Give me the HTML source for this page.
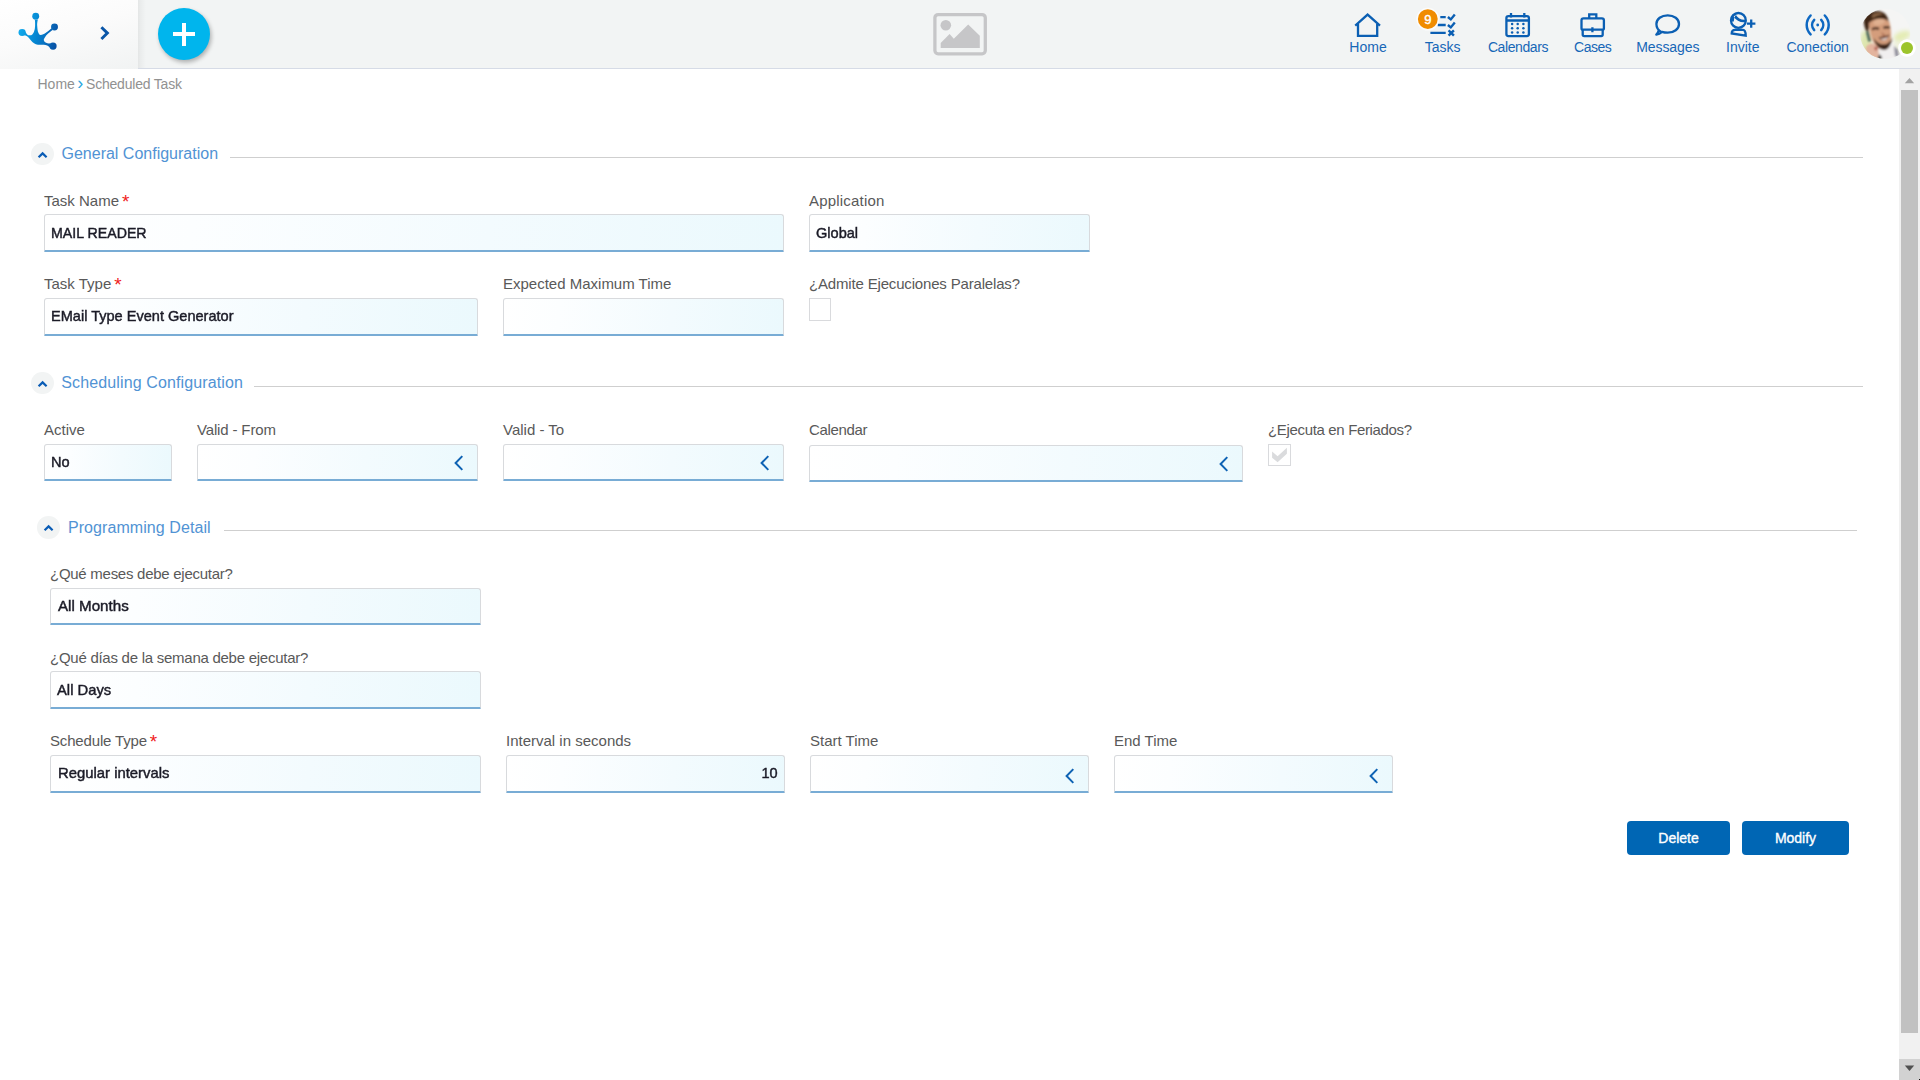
<!DOCTYPE html>
<html lang="en">
<head>
<meta charset="utf-8">
<title>Scheduled Task</title>
<style>
*{box-sizing:border-box;margin:0;padding:0}
html,body{width:1920px;height:1080px;overflow:hidden;background:#fff}
body{font-family:"Liberation Sans",sans-serif;color:#555;position:relative}
.abs{position:absolute}
#hdr{position:absolute;left:0;top:0;width:1920px;height:69px;background:#f2f4f4;border-bottom:1px solid #d6dbe6}
#hdrL{position:absolute;left:0;top:0;width:138px;height:69px;background:linear-gradient(165deg,#ffffff 0%,#fbfbfb 45%,#f1f3f3 100%)}
#hdrR{position:absolute;left:138px;top:0;width:8px;height:68px;background:linear-gradient(90deg,rgba(0,0,0,.058),rgba(0,0,0,.03) 35%,rgba(0,0,0,0))}
#plus{position:absolute;left:158px;top:8px;width:52px;height:52px;border-radius:50%;background:#00b5ed;box-shadow:1.5px 2.5px 4px rgba(0,0,0,.28)}
#plus:before{content:"";position:absolute;left:15px;top:24px;width:22px;height:4px;background:#fff}
#plus:after{content:"";position:absolute;left:24px;top:14.7px;width:4px;height:23.3px;background:#fff}
.nav{position:absolute;top:39px;font-size:14px;line-height:16px;color:#1767b7;white-space:nowrap;text-align:center;transform:translateX(-50%)}
.ico{position:absolute;top:0;left:0}
.bc{position:absolute;top:76px;font-size:14px;line-height:16px;color:#919191;white-space:nowrap}
.circ{position:absolute;width:23px;height:22.6px;border-radius:50%;background:#f2f4f4}
.stitle{position:absolute;font-size:16px;line-height:20px;color:#5193d4;white-space:nowrap}
.sline{position:absolute;height:1px;background:#cfcfcf}
.lbl{position:absolute;font-size:15px;line-height:18px;color:#595959;white-space:nowrap}
.lbl b{font-weight:normal;color:#f02020;font-size:19px;line-height:0;position:relative;top:2px;margin-left:-1.2px;letter-spacing:0}
.inp{position:absolute;border:1px solid #d8dadd;border-bottom:2px solid #78acd5;border-radius:3px 3px 1px 1px;background:linear-gradient(95deg,#ffffff 0%,#fcfeff 20%,#f3fbfe 60%,#ebf9fd 100%)}
.v{position:absolute;left:5.6px;font-size:15px;line-height:18px;color:#1b1b27;white-space:nowrap;-webkit-text-stroke:0.45px #1b1b27;transform-origin:0 50%;display:block}
.v.r{left:auto;right:6px;transform-origin:100% 50%}
.chk{position:absolute;border:1px solid #d9dadd;background:#fff}
.btn{position:absolute;top:821px;height:34px;border-radius:4px;background:#0066b4}
.btn span{position:absolute;left:0;right:0;top:8px;text-align:center;color:#fff;font-size:14px;line-height:18px;-webkit-text-stroke:0.35px #fff;display:block}
#sb{position:absolute;left:1899px;top:69px;width:21px;height:1011px;background:#f1f1f1}
#sbthumb{position:absolute;left:2px;top:21px;width:17px;height:943px;background:#c1c1c1}
#sbdn{position:absolute;left:0;top:990px;width:21px;height:21px;background:#d2d2d2}
</style>
</head>
<body>
<div id="hdr">
<div id="hdrL"></div><div id="hdrR"></div>
<div id="plus"></div>
<svg class="ico" width="1920" height="69" viewBox="0 0 1920 69">
<defs>
<linearGradient id="lg" x1="19" y1="30" x2="57" y2="38" gradientUnits="userSpaceOnUse"><stop offset="0" stop-color="#12aaec"/><stop offset=".45" stop-color="#0587d2"/><stop offset=".7" stop-color="#0872c2"/><stop offset="1" stop-color="#0853a6"/></linearGradient>
<clipPath id="avc"><circle cx="1885.2" cy="33.9" r="25.1"/></clipPath>
<radialGradient id="avbg" cx="1905" cy="30" r="40" gradientUnits="userSpaceOnUse"><stop offset="0" stop-color="#f6f6f4"/><stop offset=".5" stop-color="#f1f1ec"/><stop offset="1" stop-color="#e4e8c8"/></radialGradient>
<filter id="bl1" x="-10%" y="-10%" width="120%" height="120%"><feGaussianBlur stdDeviation="0.85"/></filter><filter id="bl2" x="-30%" y="-30%" width="160%" height="160%"><feGaussianBlur stdDeviation="2.2"/></filter>
</defs>
<!-- logo -->
<g fill="url(#lg)">
<path d="M37.85 19.5 C37.3 22 37 24 37.2 26 C37.4 29 37.6 31 38.4 32.8 C39 34.2 39.6 35 40.6 35 C42.5 35 44 34.2 45.5 33.1 C47.5 31.6 49 30.2 51.5 28.2 L52.6 30 C50.5 31.4 49.3 32.5 48.1 33.6 C46.6 35 45.5 36.4 44.7 37.8 C44 38.8 43.6 39.6 43.9 40.4 C44.2 41.4 44.8 42.1 45.6 42.6 C46.8 43.3 48 43.6 49 43.6 L50.6 43.3 L50.2 47.6 C49.3 46.8 48.3 46 47.2 45.5 C46 45 45 44.8 43.8 44.8 L37.85 44.8 C36.4 44.7 35.2 44.2 34 43.35 C32.8 42.5 31.8 41.4 31 40.4 C30.2 39.4 29.4 38.3 28.5 37.4 C27.6 36.5 26.6 35.9 25.5 35.5 L23.8 35.3 L25 31.6 C25.8 32.6 26.4 33.6 27.2 34.4 C28 35.1 28.8 35.4 29.8 35.3 C30.8 35.3 31.6 35 32.3 34.4 C33.2 33.7 33.7 32.8 34 31.85 C34.7 30 35 28 35.1 25.9 C35.2 24 35.1 22 34.9 19.9 Z"/>
<circle cx="35.7" cy="16.3" r="3.45"/><circle cx="54.5" cy="26.95" r="3.45"/><ellipse cx="22.1" cy="32.5" rx="3.6" ry="3.4"/><circle cx="53" cy="46.1" r="3.65"/>
</g>
<path d="M101.4 27.2 L107.4 33.1 L101.4 39" fill="none" stroke="#0a56a8" stroke-width="2.9"/>
<!-- image placeholder -->
<rect x="934.9" y="14.6" width="50.4" height="39.2" rx="3.2" fill="none" stroke="#c6c6c8" stroke-width="3.3"/>
<circle cx="945.8" cy="25.2" r="5.3" fill="#c6c6c8"/>
<path d="M940.7 47.9 V42.9 L949.6 34.1 L953.8 38.7 L968.2 24.5 L979.8 35.8 V47.9 Z" fill="#c6c6c8"/>
<!-- nav icons -->
<g fill="none" stroke="#0b5fb3" stroke-width="2.3">
<!-- home -->
<path d="M1358 24 V35.9 H1377.2 V24"/><path d="M1356.1 24.8 L1367.6 14.6 L1379.1 24.8" stroke-linecap="square"/>
<!-- tasks -->
<path d="M1440.3 17.1 H1445.7 M1437.7 25 H1445.7 M1430.4 32.9 H1445.7"/>
<path d="M1447.9 17 L1450.8 19.4 L1454.8 14.6 M1447.9 25 L1450.8 27.4 L1454.8 22.6 M1448.6 30.3 L1453.9 35.6 M1453.9 30.3 L1448.6 35.6" stroke-width="2.4"/>
<!-- calendar -->
<rect x="1506.4" y="16.1" width="22.5" height="20" rx="2"/>
<path d="M1506.4 20.5 H1528.9 M1511 13 V17.6 M1524.3 13 V17.6"/>
<!-- cases -->
<path d="M1583.5 18.3 H1601.9 Q1603.9 18.3 1603.9 20.3 V28.2 Q1603.9 29.7 1602.4 29.7 H1583 Q1581.5 29.7 1581.5 28.2 V20.3 Q1581.5 18.3 1583.5 18.3 Z"/>
<path d="M1582.7 29.7 V34.6 Q1582.7 36.1 1584.2 36.1 H1601.2 Q1602.7 36.1 1602.7 34.6 V29.7 M1589.2 18 V14.3 H1596.3 V18 M1592.4 27.2 V32.2"/>
<!-- messages -->
<path d="M1661.5 32.2 C1658.3 30.4 1656.4 27.4 1656.4 24 C1656.4 18.9 1661.4 15.3 1667.7 15.3 C1674 15.3 1679 18.9 1679 24 C1679 29.1 1674 32.7 1667.7 32.7 C1665.6 32.7 1663.6 32.4 1662 31.9 C1660.4 33.3 1658.4 34.2 1656.3 34.5 C1657.8 33.2 1658.6 31.5 1658.9 29.8" stroke-linejoin="round"/>
<!-- invite -->
<circle cx="1738.4" cy="20.4" r="7.4"/>
<path d="M1747 23.7 H1755.4 M1751.2 19.6 V27.8"/>
<path d="M1731.7 33.5 C1731.7 30.8 1733.2 29.9 1735.2 29.9 H1743 C1745 29.9 1745.6 31.2 1745.7 35.6 Z" stroke-linejoin="miter"/>
</g>
<path d="M1730.6 21.5 C1730.4 16.5 1733.6 13 1738 12.6 C1735.4 14.6 1734 17.6 1733.8 21.6 Z M1733.6 16.4 C1736.4 21.2 1741.6 23 1746.2 21.9 L1745.8 19.7 C1741.8 20.4 1738 18.6 1735.6 14.4 Z" fill="#0b5fb3"/>
<!-- connection -->
<g fill="none" stroke="#0e68c2" stroke-width="2.5" stroke-linecap="round">
<path d="M1814.2 19.9 C1811.4 23 1811.4 27 1814.2 30.1 M1810.6 15.5 C1805.4 21 1805.4 29 1810.6 34.3 M1821.2 19.9 C1824 23 1824 27 1821.2 30.1 M1824.8 15.5 C1830 21 1830 29 1824.8 34.3"/>
</g>
<circle cx="1817.7" cy="25" r="1.4" fill="#0e68c2"/>
<g fill="#0b5fb3">
<circle cx="1512.1" cy="24.1" r="1.25"/><circle cx="1517.7" cy="24.1" r="1.25"/><circle cx="1523.4" cy="24.1" r="1.25"/>
<circle cx="1512.1" cy="28.3" r="1.25"/><circle cx="1517.7" cy="28.3" r="1.25"/><circle cx="1523.4" cy="28.3" r="1.25"/>
<circle cx="1512.1" cy="32.6" r="1.25"/><circle cx="1517.7" cy="32.6" r="1.25"/><circle cx="1523.4" cy="32.6" r="1.25"/>
</g>
<!-- badge -->
<circle cx="1427.8" cy="19.1" r="11.4" fill="#fbfcfc"/>
<circle cx="1427.8" cy="19.1" r="9.9" fill="#f08c00"/>
<text x="1427.9" y="23.6" font-family="Liberation Sans, sans-serif" font-size="13" fill="#fff" stroke="#fff" stroke-width="0.4" text-anchor="middle">9</text>
<!-- avatar -->
<g clip-path="url(#avc)">
<rect x="1858" y="7" width="55" height="55" fill="#f5f5f4"/>
<g filter="url(#bl2)">
<ellipse cx="1902" cy="36" rx="9" ry="4.5" fill="#e4ecb4" transform="rotate(-22 1902 36)"/>
<ellipse cx="1900" cy="48" rx="9" ry="7" fill="#eef1dc"/>
<ellipse cx="1866" cy="42" rx="6" ry="12" fill="#dde6ae"/>
<ellipse cx="1872" cy="57" rx="8" ry="5" fill="#ecdca8"/>
</g>
<g filter="url(#bl1)">
<path d="M1876 60 L1880 48 L1893 44 L1899 52 L1900 60 Z" fill="#f1efef"/>
<path d="M1894 46 L1898 50 L1899 58 L1895 56 Z" fill="#8d8c9a"/>
<path d="M1877 60 L1879 54 L1882 57 L1881 60 Z" fill="#3a3838"/>
<path d="M1864 24 C1862 15 1870 10.5 1878 11 C1884 11.5 1887.5 15 1889 22 C1884 19 1876 20 1871 24 C1869 27 1868.5 30 1868 33 C1866 31 1864.5 28 1864 24 Z" fill="#412817"/>
<path d="M1872 15.5 C1875 12.6 1880 12.4 1883 14.6 C1879.6 14.6 1875 16 1872.6 18.4 Z" fill="#8c6646"/>
<path d="M1869 23 C1874 18 1884 17 1889.5 22 C1891 28 1891.5 36 1890.5 42 C1888 49 1882 51 1878 48 C1873 44 1869 34 1869 23 Z" fill="#d49d7c"/>
<ellipse cx="1879" cy="22" rx="6" ry="3" fill="#e0b090" transform="rotate(-12 1879 22)"/>
<path d="M1872 29.5 C1874 28 1877 28 1879 29 M1883.5 28 C1885.5 27 1888 27 1889.5 28" stroke="#3a2015" stroke-width="2.2" fill="none"/>
<path d="M1873.5 38 C1875 44 1878.5 49.5 1884 50 C1888.6 50 1891.6 45 1892 37 C1890.6 41.6 1888 44 1884 44.4 C1880 44.6 1876.6 42 1873.5 38 Z" fill="#4a3022"/><ellipse cx="1884.6" cy="46.8" rx="3.4" ry="2.4" fill="#3a261c"/>
<path d="M1878.5 37.5 C1881 36.5 1886 36 1889.5 34.5 C1888.5 38 1887 40 1884 40.6 C1881.5 41 1879.5 39.5 1878.5 37.5 Z" fill="#6a4030"/>
<path d="M1880 38.6 C1883 39 1886 38.4 1888.4 36.6 C1887.6 39 1886 40.2 1884 40.4 C1882 40.5 1881 39.8 1880 38.6 Z" fill="#ead8d0"/>
<path d="M1881 32 L1883 36 L1886 35.4 Z" fill="#a86c50"/>
<path d="M1866 32 L1868.4 31 L1871 41 L1868.5 42 Z" fill="#3e5c52"/>
<path d="M1866 47 C1868 44 1872 42 1875 45 C1879 48 1880 54 1877 59 L1868 59 C1866 55 1865 51 1866 47 Z" fill="#e3b49e"/>
<ellipse cx="1876" cy="48.5" rx="1.6" ry="2" fill="#b05a50"/>
</g>
</g>
<circle cx="1907" cy="48" r="8.8" fill="#fff"/>
<circle cx="1907" cy="48" r="6" fill="#9cc42c"/>
</svg>
</div>
<div class="nav" style="left:1368.0px;letter-spacing:0px">Home</div>
<div class="nav" style="left:1442.6px;letter-spacing:0px">Tasks</div>
<div class="nav" style="left:1518.0px;letter-spacing:-0.4px">Calendars</div>
<div class="nav" style="left:1592.7px;letter-spacing:-0.5px">Cases</div>
<div class="nav" style="left:1667.8px;letter-spacing:-0.1px">Messages</div>
<div class="nav" style="left:1742.8px;letter-spacing:0px">Invite</div>
<div class="nav" style="left:1817.7px;letter-spacing:-0.1px">Conection</div>
<div class="bc" style="left:37.5px">Home</div>
<div class="bc" style="left:77.3px;top:74.6px;font-size:18px;color:#2aa7df">›</div>
<div class="bc" style="left:86px;letter-spacing:-0.2px">Scheduled Task</div>
<div class="circ" style="left:31.0px;top:142.7px"></div>
<svg class="abs" style="left:31.5px;top:143px" width="22" height="22" viewBox="0 0 22 22"><path d="M6.6 14.3 L10.6 10.35 L14.6 14.3" fill="none" stroke="#0a5cb5" stroke-width="2.2"/></svg>
<div class="stitle" style="left:61.5px;top:144px;letter-spacing:0px">General Configuration</div>
<div class="sline" style="left:230px;top:157px;width:1633px"></div>
<div class="lbl" style="left:44px;top:192px;letter-spacing:0px">Task Name <b>*</b></div>
<div class="inp" style="left:44px;top:214px;width:740px;height:38px"><span class="v" style="top:9px;transform:scaleX(0.945)">MAIL READER</span></div>
<div class="lbl" style="left:809px;top:192px;letter-spacing:0.2px">Application</div>
<div class="inp" style="left:809px;top:214px;width:281px;height:38px"><span class="v" style="top:9px;transform:scaleX(0.97)">Global</span></div>
<div class="lbl" style="left:44px;top:275px;letter-spacing:0px">Task Type <b>*</b></div>
<div class="inp" style="left:44px;top:298px;width:434px;height:38px"><span class="v" style="top:8px;transform:scaleX(0.97)">EMail Type Event Generator</span></div>
<div class="lbl" style="left:503px;top:275px;letter-spacing:0px">Expected Maximum Time</div>
<div class="inp" style="left:503px;top:298px;width:281px;height:38px"></div>
<div class="lbl" style="left:809px;top:275px;letter-spacing:-0.17px">¿Admite Ejecuciones Paralelas?</div>
<div class="chk" style="left:809px;top:298px;width:22px;height:23px"></div>
<div class="circ" style="left:31.0px;top:371.7px"></div>
<svg class="abs" style="left:31.5px;top:372px" width="22" height="22" viewBox="0 0 22 22"><path d="M6.6 14.3 L10.6 10.35 L14.6 14.3" fill="none" stroke="#0a5cb5" stroke-width="2.2"/></svg>
<div class="stitle" style="left:61.3px;top:373px;letter-spacing:0.12px">Scheduling Configuration</div>
<div class="sline" style="left:254px;top:386px;width:1609px"></div>
<div class="lbl" style="left:44px;top:421px;letter-spacing:0px">Active</div>
<div class="inp" style="left:44px;top:444px;width:128px;height:37px"><span class="v" style="top:8px;transform:scaleX(0.97)">No</span></div>
<div class="lbl" style="left:197px;top:421px;letter-spacing:-0.15px">Valid - From</div>
<div class="inp" style="left:197px;top:444px;width:281px;height:37px"><svg class="abs" style="right:12px;top:9px" width="12" height="18" viewBox="0 0 12 18"><path d="M9.3 2.1 L2.6 9 L9.3 15.9" fill="none" stroke="#0f63b4" stroke-width="2"/></svg></div>
<div class="lbl" style="left:503px;top:421px;letter-spacing:0px">Valid - To</div>
<div class="inp" style="left:503px;top:444px;width:281px;height:37px"><svg class="abs" style="right:12px;top:9px" width="12" height="18" viewBox="0 0 12 18"><path d="M9.3 2.1 L2.6 9 L9.3 15.9" fill="none" stroke="#0f63b4" stroke-width="2"/></svg></div>
<div class="lbl" style="left:809px;top:421px;letter-spacing:-0.35px">Calendar</div>
<div class="inp" style="left:809px;top:445px;width:434px;height:37px"><svg class="abs" style="right:12px;top:9px" width="12" height="18" viewBox="0 0 12 18"><path d="M9.3 2.1 L2.6 9 L9.3 15.9" fill="none" stroke="#0f63b4" stroke-width="2"/></svg></div>
<div class="lbl" style="left:1268px;top:421px;letter-spacing:-0.34px">¿Ejecuta en Feriados?</div>
<div class="chk" style="left:1268px;top:444px;width:23px;height:22px"><svg width="23" height="22" viewBox="0 0 23 22" style="position:absolute;left:-1px;top:-1px"><path d="M4.1 7.5 L9.6 12.3 L18.9 3.8 L18.9 9.7 L9.6 18.2 L4.1 13.7 Z" fill="#dadbdd"/></svg></div>
<div class="circ" style="left:37.4px;top:516.0px"></div>
<svg class="abs" style="left:37.9px;top:516.3px" width="22" height="22" viewBox="0 0 22 22"><path d="M6.6 14.3 L10.6 10.35 L14.6 14.3" fill="none" stroke="#0a5cb5" stroke-width="2.2"/></svg>
<div class="stitle" style="left:67.9px;top:518.1999999999999px;letter-spacing:0.08px">Programming Detail</div>
<div class="sline" style="left:224px;top:530px;width:1633px"></div>
<div class="lbl" style="left:50px;top:565px;letter-spacing:-0.27px">¿Qué meses debe ejecutar?</div>
<div class="inp" style="left:50px;top:588px;width:431px;height:37px"><span class="v" style="top:8px;margin-left:1.2px;transform:scaleX(1.01)">All Months</span></div>
<div class="lbl" style="left:50px;top:649px;letter-spacing:-0.26px">¿Qué días de la semana debe ejecutar?</div>
<div class="inp" style="left:50px;top:671px;width:431px;height:38px"><span class="v" style="top:9px;margin-left:0.8px;transform:scaleX(0.985)">All Days</span></div>
<div class="lbl" style="left:50px;top:732px;letter-spacing:-0.16px">Schedule Type <b>*</b></div>
<div class="inp" style="left:50px;top:755px;width:431px;height:38px"><span class="v" style="top:8px;margin-left:1px;transform:scaleX(0.99)">Regular intervals</span></div>
<div class="lbl" style="left:506px;top:732px;letter-spacing:0px">Interval in seconds</div>
<div class="inp" style="left:506px;top:755px;width:279px;height:38px"><span class="v r" style="top:8px;transform:scaleX(0.97)">10</span></div>
<div class="lbl" style="left:810px;top:732px;letter-spacing:0px">Start Time</div>
<div class="inp" style="left:810px;top:755px;width:279px;height:38px"><svg class="abs" style="right:12px;top:10.5px" width="12" height="18" viewBox="0 0 12 18"><path d="M9.3 2.1 L2.6 9 L9.3 15.9" fill="none" stroke="#0f63b4" stroke-width="2"/></svg></div>
<div class="lbl" style="left:1114px;top:732px;letter-spacing:0px">End Time</div>
<div class="inp" style="left:1114px;top:755px;width:279px;height:38px"><svg class="abs" style="right:12px;top:10.5px" width="12" height="18" viewBox="0 0 12 18"><path d="M9.3 2.1 L2.6 9 L9.3 15.9" fill="none" stroke="#0f63b4" stroke-width="2"/></svg></div>
<div class="btn" style="left:1627px;width:103px"><span>Delete</span></div>
<div class="btn" style="left:1742px;width:107px"><span>Modify</span></div>
<div id="sb"><div id="sbthumb"></div><div id="sbdn"></div>
<svg class="abs" style="left:0;top:0" width="21" height="1011" viewBox="0 0 21 1011"><path d="M5.8 14.2 L10.5 9 L15.2 14.2 Z" fill="#a3a3a3"/><path d="M5.8 996.6 L15.2 996.6 L10.5 1002 Z" fill="#505050"/><rect x="20" y="1010" width="1" height="1" fill="#111"/></svg></div>
</body>
</html>
